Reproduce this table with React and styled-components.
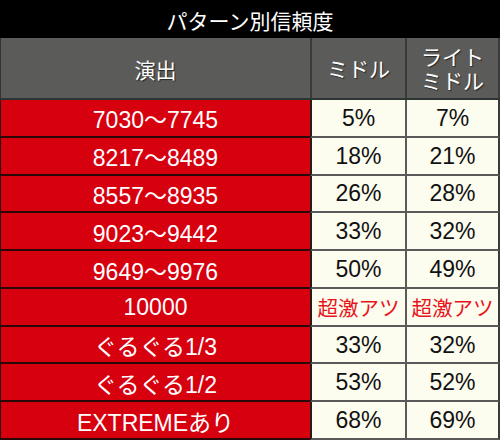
import React from "react";
import styled, { createGlobalStyle } from "styled-components";

const Global = createGlobalStyle`
  html, body { margin: 0; padding: 0; background: #000; }
  body { width: 500px; height: 440px; overflow: hidden; }
  * { box-sizing: border-box; }
`;

const FONT = `"Liberation Sans", "Noto Sans CJK JP", sans-serif`;

const Table = styled.div`
  width: 500px;
  height: 440px;
  display: flex;
  flex-direction: column;
  background: #000;
  font-family: ${FONT};
`;

const Title = styled.div`
  height: 38px;
  display: flex;
  align-items: center;
  justify-content: center;
  color: #fff;
  font-size: 21px;
  font-family: "Noto Sans CJK JP", sans-serif;
  padding-top: 1px;
`;

const Grid = styled.div`
  display: grid;
  grid-template-columns: 310px 95px 95px;
`;

const HeaderRow = styled(Grid)`
  height: 62px;
  background: #5b5b59;
  border-bottom: 2px solid #2c3434;
`;

const HeadCell = styled.div`
  display: flex;
  align-items: center;
  justify-content: center;
  text-align: center;
  color: #fff;
  font-family: "Noto Sans CJK JP", sans-serif;
  font-size: 21px;
  line-height: 24px;
  text-shadow: 1px 1px 1px rgba(0, 0, 0, 0.6);
  border-left: ${(p) => (p.$first ? "1px solid #333" : "2px solid #3a3a3a")};
  border-right: ${(p) => (p.$last ? "2px solid #3a3a3a" : "none")};
  padding-top: ${(p) => (p.$first ? "2px" : "0")};
`;

const Body = styled.div`
  flex: 1;
  display: flex;
  flex-direction: column;
`;

const Row = styled(Grid)`
  flex: 1;
`;

const NameCell = styled.div`
  display: flex;
  align-items: center;
  justify-content: center;
  background: #d7000f;
  color: #fff;
  font-size: 23px;
  border-left: 1px solid #2a0808;
  border-bottom: 2px solid #2a0808;
  padding-top: 1px;
`;

const ValueCell = styled.div`
  display: flex;
  align-items: center;
  justify-content: center;
  background: #fcfcef;
  color: ${(p) => (p.$hot ? "#e8141c" : "#111")};
  font-size: ${(p) => (p.$hot ? "20.5px" : "23px")};
  font-family: ${(p) => (p.$hot ? `"Noto Sans CJK JP", sans-serif` : FONT)};
  border-left: 2px solid ${(p) => (p.$second ? "#2a1a1a" : "#5a5a5a")};
  border-right: ${(p) => (p.$last ? "2px solid #3a3a3a" : "none")};
  border-bottom: 2px solid #5a5a5a;
  padding-top: 1px;
  white-space: nowrap;
`;

const rows = [
  ["7030～7745", "5%", "7%"],
  ["8217～8489", "18%", "21%"],
  ["8557～8935", "26%", "28%"],
  ["9023～9442", "33%", "32%"],
  ["9649～9976", "50%", "49%"],
  ["10000", "超激アツ", "超激アツ"],
  ["ぐるぐる1/3", "33%", "32%"],
  ["ぐるぐる1/2", "53%", "52%"],
  ["EXTREMEあり", "68%", "69%"],
];

export default function App() {
  return (
    <>
      <Global />
      <Table>
        <Title>パターン別信頼度</Title>
        <HeaderRow>
          <HeadCell $first>演出</HeadCell>
          <HeadCell>ミドル</HeadCell>
          <HeadCell $last>
            ライト
            <br />
            ミドル
          </HeadCell>
        </HeaderRow>
        <Body>
          {rows.map(([name, a, b]) => (
            <Row key={name}>
              <NameCell>{name}</NameCell>
              <ValueCell $second $hot={a === "超激アツ"}>
                {a}
              </ValueCell>
              <ValueCell $last $hot={b === "超激アツ"}>
                {b}
              </ValueCell>
            </Row>
          ))}
        </Body>
      </Table>
    </>
  );
}
